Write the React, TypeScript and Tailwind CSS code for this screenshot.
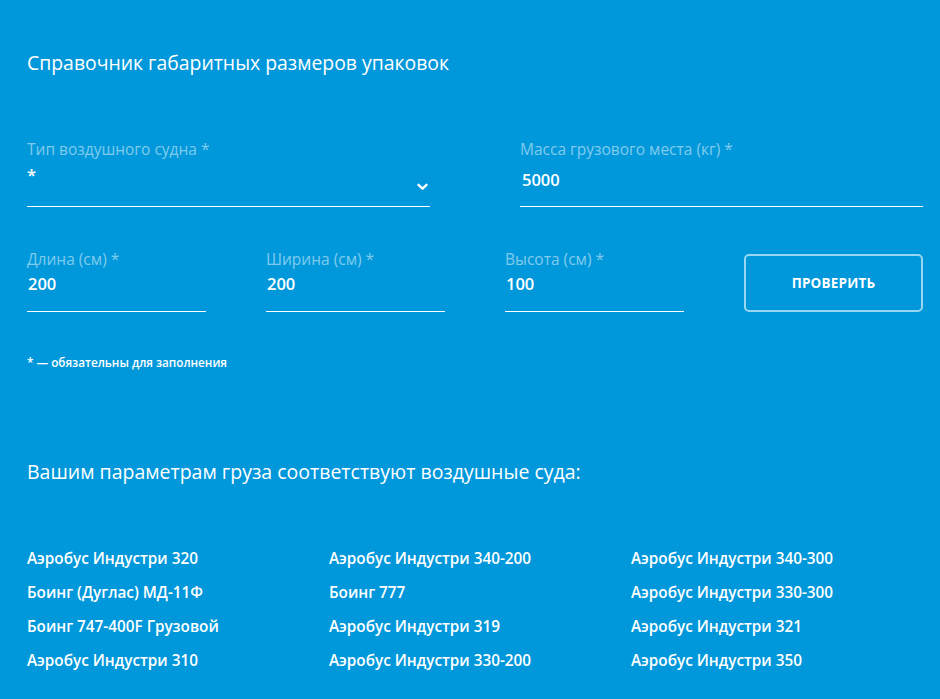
import React from "react";

const FONT = { fontFamily: '"Open Sans", "Noto Sans", sans-serif' };

const AIRCRAFT = [
  ["Аэробус Индустри 320", "Аэробус Индустри 340-200", "Аэробус Индустри 340-300"],
  ["Боинг (Дуглас) МД-11Ф", "Боинг 777", "Аэробус Индустри 330-300"],
  ["Боинг 747-400F Грузовой", "Аэробус Индустри 319", "Аэробус Индустри 321"],
  ["Аэробус Индустри 310", "Аэробус Индустри 330-200", "Аэробус Индустри 350"],
];

function Chevron() {
  return (
    <svg width="11" height="8" viewBox="0 0 11 8" fill="none">
      <path d="M1.5 1.8l4 3.8 4-3.8" stroke="#fff" strokeWidth="2.4" strokeLinecap="round" strokeLinejoin="round" />
    </svg>
  );
}

function SmallField({ label, value }: { label: string; value: string }) {
  return (
    <div>
      <div className="text-[15.5px] leading-[18px] text-white/50">{label}</div>
      <div className="border-b border-white pt-[5px] pb-[16px] text-[16.5px] leading-[22px] font-semibold text-white pl-[1px]">
        {value}
      </div>
    </div>
  );
}

export default function App() {
  return (
    <div className="min-h-[699px] bg-[#0098db] text-white" style={FONT}>
      <div className="w-[896px] ml-[27px] pt-[51px] pb-[30px]">
        <h1 className="text-[19.4px] leading-[24px] font-normal">Справочник габаритных размеров упаковок</h1>

        {/* первая строка */}
        <div className="grid grid-cols-2 gap-x-[90px] mt-[65px]">
          <div>
            <div className="text-[15.5px] leading-[18px] text-white/50">Тип воздушного судна *</div>
            <div className="relative border-b border-white h-[49px]">
              <span className="absolute left-0 top-[6px] text-[16.5px] leading-[22px] font-semibold">*</span>
              <span className="absolute right-[2px] top-[25px]">
                <Chevron />
              </span>
            </div>
          </div>
          <div>
            <div className="text-[15.5px] leading-[18px] text-white/50">Масса грузового места (кг) *</div>
            <div className="border-b border-white pt-[11px] pb-[15px] text-[16.5px] leading-[22px] font-semibold pl-[2px]">
              5000
            </div>
          </div>
        </div>

        {/* вторая строка */}
        <div className="grid grid-cols-4 gap-x-[60px] mt-[43px]">
          <SmallField label="Длина (см) *" value="200" />
          <SmallField label="Ширина (см) *" value="200" />
          <SmallField label="Высота (см) *" value="100" />
          <button className="mt-[4px] h-[58px] rounded-[5px] border-2 border-white/60 text-[13.5px] font-bold tracking-[0.2px] text-white">
            ПРОВЕРИТЬ
          </button>
        </div>

        <p className="mt-[42px] text-[11.7px] leading-[16px] font-semibold">* — обязательны для заполнения</p>

        <h2 className="mt-[90px] text-[19.5px] leading-[24px] font-normal">
          Вашим параметрам груза соответствуют воздушные суда:
        </h2>

        <div className="mt-[64px] grid grid-cols-[302px_302px_302px] gap-y-[14px]">
          {AIRCRAFT.flat().map((name) => (
            <div key={name} className="text-[15.3px] leading-[20px] font-semibold">
              {name}
            </div>
          ))}
        </div>
      </div>
    </div>
  );
}
